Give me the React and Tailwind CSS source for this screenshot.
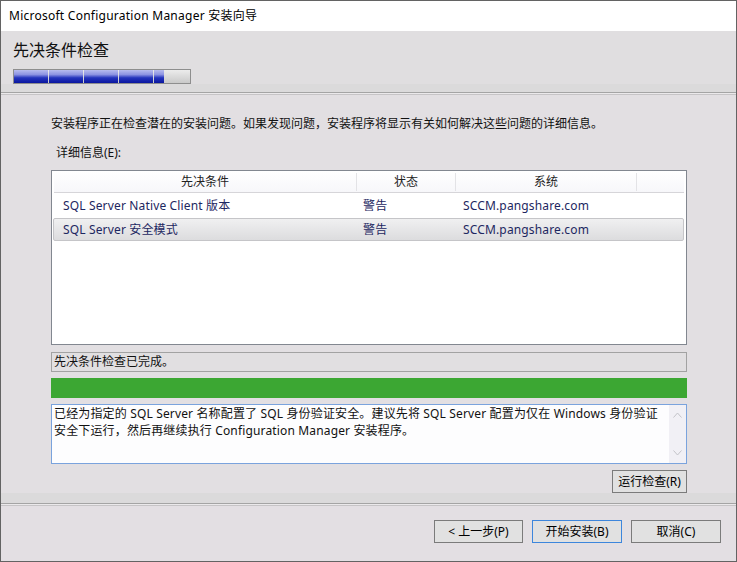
import React from 'react';

const rows = [
  { name: 'SQL Server Native Client 版本', status: '警告', host: 'SCCM.pangshare.com', selected: false },
  { name: 'SQL Server 安全模式', status: '警告', host: 'SCCM.pangshare.com', selected: true },
];

const blueFill = 'bg-[linear-gradient(to_bottom,#b7bcef_0%,#8c93e2_35%,#2434bd_60%,#0a169f_100%)]';

const ProgressSteps = () => (
  <div className="flex w-[178px] h-[15px] gap-px border border-[#8e8e8e] bg-[linear-gradient(to_bottom,#ececec,#c9c9c9)]">
    {[0, 1, 2, 3].map((i) => (
      <div key={i} className={`w-[34px] h-full ${blueFill}`} />
    ))}
    <div className={`w-[10px] h-full ${blueFill}`} />
  </div>
);

const Chevron = ({ up }) => (
  <svg width="9" height="6" viewBox="0 0 9 6" fill="none" stroke="#c3c3c8" strokeWidth="1">
    {up ? <path d="M0.5 5.5 L4.5 1 L8.5 5.5" /> : <path d="M0.5 0.5 L4.5 5 L8.5 0.5" />}
  </svg>
);

const Button = ({ children, primary, className = '' }) => (
  <button
    className={`h-[23px] bg-[#e1e1e1] text-[12px] text-black leading-none flex items-center justify-center border ${
      primary ? 'border-[#3d86dc]' : 'border-[#7b7b7b]'
    } ${className}`}
  >
    {children}
  </button>
);

export default function App() {
  return (
    <div className="w-[737px] h-[562px] border border-[#636363] bg-[#e2dfe2] flex flex-col font-['Noto_Sans','Noto_Sans_CJK_SC',sans-serif] text-[12px] overflow-hidden">
      {/* title bar */}
      <div className="h-[30px] shrink-0 bg-white flex items-center pl-[8px] text-black tracking-[0.25px]">
        Microsoft Configuration Manager 安装向导
      </div>

      {/* page header */}
      <div className="h-[61px] shrink-0 flex flex-col bg-[#e0dee0]">
        <div className="pt-[8px] pl-[12px] h-[30px] text-[16px] leading-[22px] text-[#111]">先决条件检查</div>
        <div className="mt-[8px] pl-[12px]">
          <ProgressSteps />
        </div>
        <div className="h-[8px] bg-[#dbdadb]" />
      </div>
      <div className="h-px bg-[#a4a4a4]" />
      <div className="h-px bg-[#ebe9eb]" />
      <div className="h-px bg-[#c6c4c6]" />

      {/* body */}
      <div className="h-[398px] shrink-0 flex flex-col pl-[50px] pt-[21px]">
        <div className="h-[16px] leading-[16px] text-[#111]">
          安装程序正在检查潜在的安装问题。如果发现问题，安装程序将显示有关如何解决这些问题的详细信息。
        </div>
        <div className="mt-[13px] h-[16px] leading-[16px] pl-[5px] text-[#111]">详细信息(E):</div>

        <div className="mt-[9px] w-[636px] h-[175px] border border-[#828790] bg-white flex flex-col">
          <div className="h-[22px] ml-[2px] mr-[2px] grid grid-cols-[303px_99px_181px_1fr] border-b border-[#d6d5d9] bg-[linear-gradient(to_bottom,#ffffff,#f7f7fa)] text-[#222]">
            <div className="flex items-center justify-center border-r border-[#e3e3e6] my-[2px]">先决条件</div>
            <div className="flex items-center justify-center border-r border-[#e3e3e6] my-[2px]">状态</div>
            <div className="flex items-center justify-center border-r border-[#e3e3e6] my-[2px]">系统</div>
            <div />
          </div>
          <div className="flex flex-col gap-px mt-px ml-px mr-[2px]">
            {rows.map((r) => (
              <div
                key={r.name}
                className={`h-[23px] grid grid-cols-[303px_99px_181px_1fr] items-center text-[#1d2761] rounded-[2px] border tracking-[0.15px] ${
                  r.selected
                    ? 'border-[#c5c5c8] bg-[linear-gradient(to_bottom,#f0f0f1,#dcdcde)]'
                    : 'border-transparent'
                }`}
              >
                <div className="pl-[9px]">{r.name}</div>
                <div className="pl-[6px]">{r.status}</div>
                <div className="pl-[7px]">{r.host}</div>
                <div />
              </div>
            ))}
          </div>
        </div>

        <div className="mt-[7px] w-[636px] h-[20px] border border-[#a2a2a2] bg-[#e1dfe1] flex items-center pl-[2px] text-[#111]">
          先决条件检查已完成。
        </div>

        <div className="mt-[6px] w-[636px] h-[20px] bg-[#3ca733]" />

        <div className="mt-[6px] w-[636px] h-[60px] border border-[#7aa3dd] bg-[#fdfdfe] flex">
          <div className="flex-1 pl-[2px] pr-[6px] leading-[17px] text-[#111] tracking-[0.15px]">
            已经为指定的 SQL Server 名称配置了 SQL 身份验证安全。建议先将 SQL Server 配置为仅在 Windows 身份验证
            <br />
            安全下运行，然后再继续执行 Configuration Manager 安装程序。
          </div>
          <div className="w-[17px] bg-[#f1f0f5] flex flex-col items-center justify-between py-[7px]">
            <Chevron up />
            <Chevron />
          </div>
        </div>

        <div className="mt-[6px] w-[636px] flex justify-end">
          <Button className="w-[75px]">运行检查(R)</Button>
        </div>
      </div>

      <div className="h-[10px] shrink-0 bg-[#dbdadb]" />
      <div className="h-px bg-[#a4a4a4]" />
      <div className="h-px bg-[#ebe9eb]" />
      <div className="h-px bg-[#c6c4c6]" />

      {/* footer */}
      <div className="flex-1 flex justify-end items-start gap-[9px] pt-[14px] pr-[15px] bg-[#e3dfe3]">
        <Button className="w-[89px]">&lt; 上一步(P)</Button>
        <Button primary className="w-[90px]">开始安装(B)</Button>
        <Button className="w-[90px]">取消(C)</Button>
      </div>
    </div>
  );
}
